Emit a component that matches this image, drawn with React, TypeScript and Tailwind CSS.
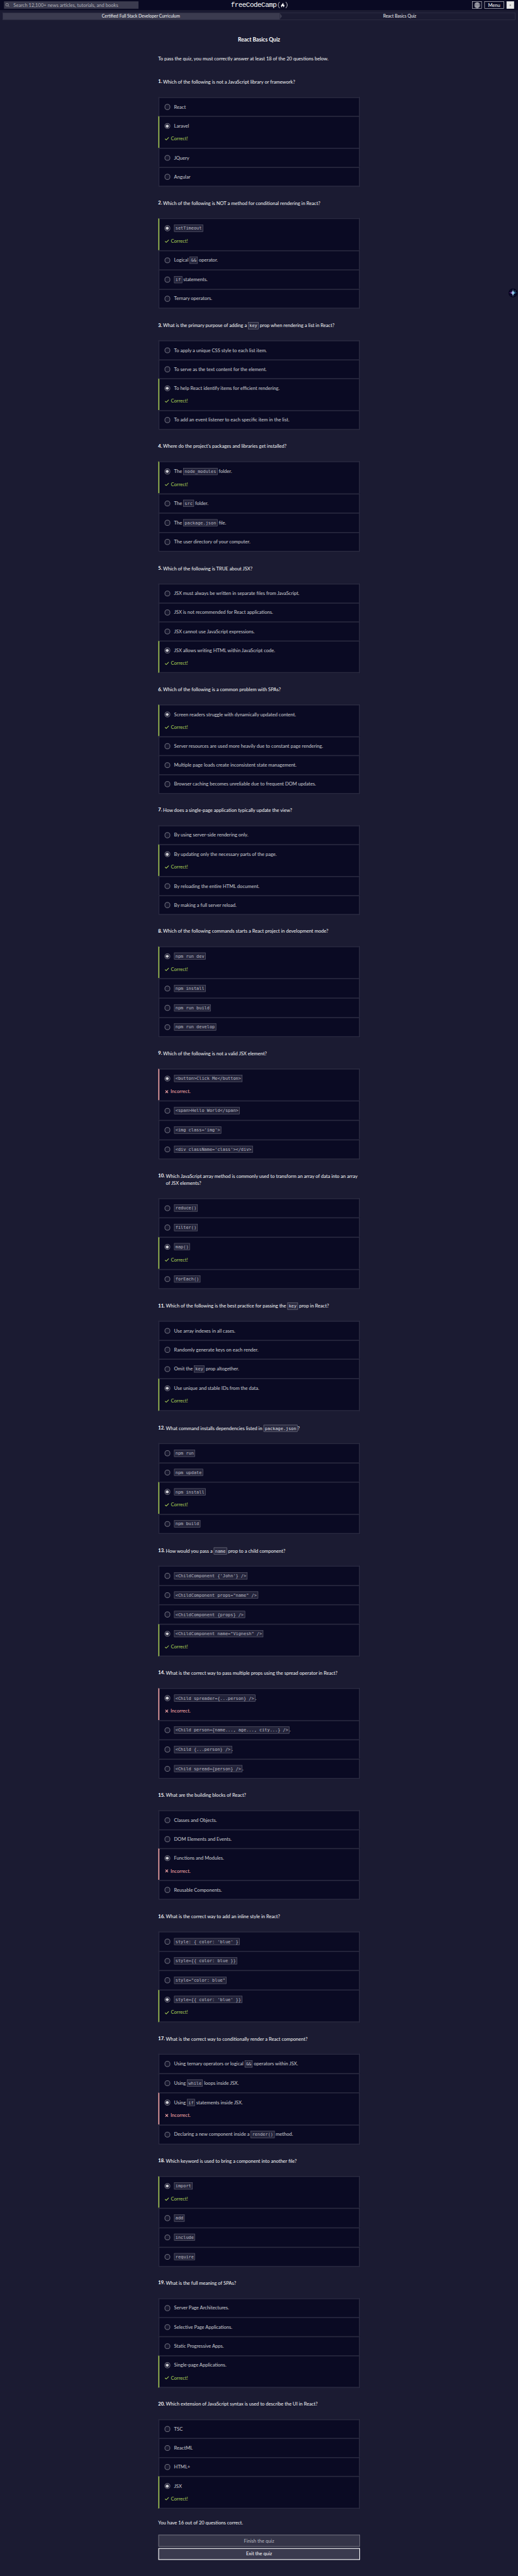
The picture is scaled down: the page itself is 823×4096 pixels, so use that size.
import { Fragment } from "react";

type Result = "correct" | "incorrect";

interface Question {
  text: string;
  options: string[];
  picked: number;
  result: Result;
  /** Height of the whole block, heading included. */
  block: string;
  tall?: boolean;
}

// Text between backticks is shown as inline code.
const questions: Question[] = [
  {
    text: "Which of the following is not a JavaScript library or framework?",
    options: ["React", "Laravel", "JQuery", "Angular"],
    picked: 1,
    result: "correct",
    block: "h-[360.2px]",
  },
  {
    text: "Which of the following is NOT a method for conditional rendering in React?",
    options: ["`setTimeout`", "Logical `&&` operator.", "`if` statements.", "Ternary operators."],
    picked: 0,
    result: "correct",
    block: "h-[364px]",
  },
  {
    text: "What is the primary purpose of adding a `key` prop when rendering a list in React?",
    options: [
      "To apply a unique CSS style to each list item.",
      "To serve as the text content for the element.",
      "To help React identify items for efficient rendering.",
      "To add an event listener to each specific item in the list.",
    ],
    picked: 2,
    result: "correct",
    block: "h-[360px]",
  },
  {
    text: "Where do the project's packages and libraries get installed?",
    options: [
      "The `node_modules` folder.",
      "The `src` folder.",
      "The `package.json` file.",
      "The user directory of your computer.",
    ],
    picked: 0,
    result: "correct",
    block: "h-[364px]",
  },
  {
    text: "Which of the following is TRUE about JSX?",
    options: [
      "JSX must always be written in separate files from JavaScript.",
      "JSX is not recommended for React applications.",
      "JSX cannot use JavaScript expressions.",
      "JSX allows writing HTML within JavaScript code.",
    ],
    picked: 3,
    result: "correct",
    block: "h-[360px]",
  },
  {
    text: "Which of the following is a common problem with SPAs?",
    options: [
      "Screen readers struggle with dynamically updated content.",
      "Server resources are used more heavily due to constant page rendering.",
      "Multiple page loads create inconsistent state management.",
      "Browser caching becomes unreliable due to frequent DOM updates.",
    ],
    picked: 0,
    result: "correct",
    block: "h-[359.8px]",
  },
  {
    text: "How does a single-page application typically update the view?",
    options: [
      "By using server-side rendering only.",
      "By updating only the necessary parts of the page.",
      "By reloading the entire HTML document.",
      "By making a full server reload.",
    ],
    picked: 1,
    result: "correct",
    block: "h-[360px]",
  },
  {
    text: "Which of the following commands starts a React project in development mode?",
    options: ["`npm run dev`", "`npm install`", "`npm run build`", "`npm run develop`"],
    picked: 0,
    result: "correct",
    block: "h-[364px]",
  },
  {
    text: "Which of the following is not a valid JSX element?",
    options: [
      "`<button>Click Me</button>`",
      "`<span>Hello World</span>`",
      "`<img class='img'>`",
      "`<div className='class'></div>`",
    ],
    picked: 0,
    result: "incorrect",
    block: "h-[365px]",
  },
  {
    text: "Which JavaScript array method is commonly used to transform an array of data into an array of JSX elements?",
    options: ["`reduce()`", "`filter()`", "`map()`", "`forEach()`"],
    picked: 2,
    result: "correct",
    block: "h-[386.4px]",
    tall: true,
  },
  {
    text: "Which of the following is the best practice for passing the `key` prop in React?",
    options: [
      "Use array indexes in all cases.",
      "Randomly generate keys on each render.",
      "Omit the `key` prop altogether.",
      "Use unique and stable IDs from the data.",
    ],
    picked: 3,
    result: "correct",
    block: "h-[363.8px]",
  },
  {
    text: "What command installs dependencies listed in `package.json`?",
    options: ["`npm run`", "`npm update`", "`npm install`", "`npm build`"],
    picked: 2,
    result: "correct",
    block: "h-[365px]",
  },
  {
    text: "How would you pass a `name` prop to a child component?",
    options: [
      "`<ChildComponent {'John'} />`",
      "`<ChildComponent props=\"name\" />`",
      "`<ChildComponent {props} />`",
      "`<ChildComponent name=\"Vignesh\" />`",
    ],
    picked: 3,
    result: "correct",
    block: "h-[364px]",
  },
  {
    text: "What is the correct way to pass multiple props using the spread operator in React?",
    options: [
      "`<Child spreader={...person} />`.",
      "`<Child person={name..., age..., city...} />`.",
      "`<Child {...person} />`.",
      "`<Child spread={person} />`.",
    ],
    picked: 0,
    result: "incorrect",
    block: "h-[364.1px]",
  },
  {
    text: "What are the building blocks of React?",
    options: [
      "Classes and Objects.",
      "DOM Elements and Events.",
      "Functions and Modules.",
      "Reusable Components.",
    ],
    picked: 2,
    result: "incorrect",
    block: "h-[360.9px]",
  },
  {
    text: "What is the correct way to add an inline style in React?",
    options: [
      "`style: { color: 'blue' }`",
      "`style={{ color: blue }}`",
      "`style=\"color: blue\"`",
      "`style={{ color: 'blue' }}`",
    ],
    picked: 3,
    result: "correct",
    block: "h-[364px]",
  },
  {
    text: "What is the correct way to conditionally render a React component?",
    options: [
      "Using ternary operators or logical `&&` operators within JSX.",
      "Using `while` loops inside JSX.",
      "Using `if` statements inside JSX.",
      "Declaring a new component inside a `render()` method.",
    ],
    picked: 2,
    result: "incorrect",
    block: "h-[363.8px]",
  },
  {
    text: "Which keyword is used to bring a component into another file?",
    options: ["`import`", "`add`", "`include`", "`require`"],
    picked: 0,
    result: "correct",
    block: "h-[364px]",
  },
  {
    text: "What is the full meaning of SPAs?",
    options: [
      "Server Page Architectures.",
      "Selective Page Applications.",
      "Static Progressive Apps.",
      "Single-page Applications.",
    ],
    picked: 3,
    result: "correct",
    block: "h-[359.9px]",
  },
  {
    text: "Which extension of JavaScript syntax is used to describe the UI in React?",
    options: ["TSC", "ReactML", "HTML+", "JSX"],
    picked: 3,
    result: "correct",
    block: "h-[339px]",
  },
];

function RichText({ value }: { value: string }) {
  return (
    <>
      {value.split("`").map((part, i) =>
        i % 2 === 1 ? (
          <code
            key={i}
            className="border border-[#858591] bg-[#2a2a40] px-[3px] py-[2px] font-['DejaVu_Sans_Mono',monospace] text-[12.96px] whitespace-pre text-[#dfdfe2]"
          >
            {part}
          </code>
        ) : (
          <Fragment key={i}>{part}</Fragment>
        ),
      )}
    </>
  );
}

function Radio({ checked }: { checked: boolean }) {
  return (
    <span className="flex size-[16.4px] shrink-0 items-center justify-center rounded-full border border-white bg-[#1b1b32]">
      {checked && <span className="size-[8.6px] rounded-full bg-white" />}
    </span>
  );
}

function Feedback({ result }: { result: Result }) {
  if (result === "correct") {
    return (
      <p className="mt-[17.4px] flex h-[20.6px] items-center gap-[6px] text-[#acd157]">
        <svg viewBox="0 0 13 10" className="h-[10px] w-[13px]" fill="none" stroke="currentColor" strokeWidth="1.9">
          <path d="M0.8 5.2 4.6 8.6 12.2 0.9" />
        </svg>
        Correct!
      </p>
    );
  }
  return (
    <p className="mt-[17.4px] flex h-[20.6px] items-center gap-[7px] pl-px text-[#ffadad]">
      <svg viewBox="0 0 10 10" className="size-[10px]" fill="none" stroke="currentColor" strokeWidth="2">
        <path d="M0.9 0.9 9.1 9.1M9.1 0.9 0.9 9.1" />
      </svg>
      Incorrect.
    </p>
  );
}

function Option({ value, result }: { value: string; result?: Result }) {
  const edge =
    result === "correct"
      ? "border-l-[#acd157]"
      : result === "incorrect"
        ? "border-l-[#ffadad]"
        : "border-l-[#2a2a40]";
  const line = value.includes("`") ? "h-[21.6px]" : "h-[20.6px]";
  return (
    <li
      className={`border-t-3 border-r-3 border-l-3 border-[#2a2a40] bg-[#0a0a23] py-[16.5px] pl-[16px] last:border-b-3 ${edge}`}
    >
      <div className={`flex items-center gap-[12px] opacity-80 ${line}`}>
        <Radio checked={result !== undefined} />
        <span>
          <RichText value={value} />
        </span>
      </div>
      {result && <Feedback result={result} />}
    </li>
  );
}

function QuestionBlock({ question, index }: { question: Question; index: number }) {
  return (
    <section className={question.block}>
      <div className={`flex pt-[17.5px] text-[#f5f6f7] ${question.tall ? "h-[92.9px]" : "h-[72px]"}`}>
        <b className={`-mt-px shrink-0 font-bold text-white ${index < 9 ? "w-[14.4px]" : "w-[22.8px]"}`}>
          {index + 1}.
        </b>
        <h2>
          <RichText value={question.text} />
        </h2>
      </div>
      <ul>
        {question.options.map((option, i) => (
          <Option key={option} value={option} result={i === question.picked ? question.result : undefined} />
        ))}
      </ul>
    </section>
  );
}

function Header() {
  return (
    <header className="grid h-[30px] grid-cols-[1fr_auto_1fr] items-center bg-[#0a0a23] px-[12px]">
      <div className="flex h-[22px] w-[400px] items-center gap-[12px] bg-[#3b3b4f] pl-[4px] text-[#b1b1bb]">
        <svg viewBox="0 0 12 12" className="size-[12px]" fill="none" stroke="#d0d0d5" strokeWidth="1.1">
          <circle cx="5" cy="5" r="4" />
          <path d="M8 8l3.4 3.4" />
        </svg>
        <span>Search 12,100+ news articles, tutorials, and books</span>
      </div>
      <div className="flex items-center pl-[2px] text-white">
        <span className="font-['Liberation_Mono',monospace] text-[20.5px] leading-[22px] tracking-[-0.97px]">
          freeCodeCamp
        </span>
        <svg viewBox="0 0 30 20" className="ml-[4px] h-[20px] w-[30px]" fill="none" stroke="white" strokeWidth="1.5">
          <path d="M6 0.8C0.2 6 0.2 14 6 19.2M24 0.8c5.8 5.2 5.8 13.2 0 18.4" />
          <path
            d="M14.3 3c3 3-4.5 6-4.2 9.800.2 2.500 1.600 3.800 3.200 4.500-1.600-2.200.2-3.500 1.200-5.300.4 1.200 1.200 1.200 1.500.8 1.500 1.600 1.300 3.200.2 4.500 4.500-2 4.500-6 2.500-8.500-.2.900-.7 1.300-1.200 1.200C18.200 7 16.500 4 14.300 3z"
            fill="white"
            stroke="none"
          />
        </svg>
      </div>
      <div className="flex items-center justify-end gap-[8px] text-white">
        <span className="flex h-[22px] w-[28px] items-center justify-center border border-white">
          <svg viewBox="0 0 17 17" className="size-[17px]" fill="none" stroke="white" strokeWidth="1.2">
            <circle cx="8.5" cy="8.5" r="7.7" />
            <ellipse cx="8.5" cy="8.5" rx="3.8" ry="7.7" />
            <path d="M8.5 0.8v15.4M0.8 8.5h15.4M2 4.7h13M2 12.3h13" />
          </svg>
        </span>
        <span className="flex h-[22px] w-[58px] items-center justify-center border border-white">Menu</span>
        <span className="flex size-[22px] items-center justify-center border border-[#d0d0d5] bg-[#e6e6e6]">
          <span className="h-[5px] w-[4px] rounded-full bg-[#8f8f8f]" />
        </span>
      </div>
    </header>
  );
}

function Breadcrumb() {
  return (
    <nav className="mx-[8px] mt-[8px] flex h-[20.7px] border border-[#3b3b4f] text-[12.8px] text-[#f5f6f7]">
      <div className="flex w-[823px] items-center justify-center bg-[#3b3b4f] pr-[3px]">
        Certified Full Stack Developer Curriculum
      </div>
      <svg viewBox="0 0 7 19" preserveAspectRatio="none" className="h-full w-[7px]">
        <path d="M0 0 7 9.5 0 19z" fill="#3b3b4f" />
      </svg>
      <div className="flex flex-1 items-center justify-center pl-[7px]">React Basics Quiz</div>
    </nav>
  );
}

function AssistantButton() {
  return (
    <svg viewBox="0 0 28 28" className="absolute top-[858px] left-[1511.5px] size-[28px]">
      <defs>
        <linearGradient id="spark" x1="0" x2="1">
          <stop offset="0.15" stopColor="#a02bc4" />
          <stop offset="0.5" stopColor="#9fd8ef" />
          <stop offset="0.85" stopColor="#1c7fc4" />
        </linearGradient>
      </defs>
      <circle cx="14" cy="14" r="13.5" fill="#070720" />
      <path
        d="M14 1.5c.6 9.500 3 11.900 12.500 12.500-9.500.6-11.900 3-12.500 12.500C13.400 17 11 14.600 1.500 14 11 13.400 13.400 11 14 1.500z"
        fill="url(#spark)"
      />
      <circle cx="8.5" cy="9" r="1.2" fill="#8a2fb8" />
      <circle cx="19.8" cy="9" r="1.4" fill="#5fb4d8" />
      <circle cx="8.5" cy="20.5" r="1.1" fill="#3f2c8c" />
      <circle cx="19.5" cy="20.5" r="1.1" fill="#1f2f78" />
    </svg>
  );
}

export default function App() {
  return (
    <div className="h-[4096px] w-[823px] overflow-hidden bg-[#1b1b32]">
      <div className="relative h-[7669px] w-[1541px] origin-top-left scale-[0.5341] bg-[#1b1b32] font-['Lato',sans-serif] text-[14.2px] leading-[20.6px]">
        <Header />
        <Breadcrumb />
        <main className="mx-auto w-[600px] text-[#f5f6f7]">
          <h1 className="mt-[49px] text-center text-[16px] leading-[20.6px] font-bold text-white">React Basics Quiz</h1>
          <p className="mt-[36.7px] mb-[31.3px]">
            To pass the quiz, you must correctly answer at least 18 of the 20 questions below.
          </p>
          {questions.map((question, i) => (
            <QuestionBlock key={question.text} question={question} index={i} />
          ))}
          <p className="mt-[32px]">You have 16 out of 20 questions correct.</p>
          <button className="mt-[24.5px] flex h-[36px] w-full items-center justify-center border-2 border-[#6f6f7c] bg-[#343448] text-[#b9b9c1]">
            Finish the quiz
          </button>
          <button className="mt-[4px] flex h-[35px] w-full items-center justify-center border-2 border-white bg-[#3b3b4f] text-white">
            Exit the quiz
          </button>
        </main>
        <AssistantButton />
      </div>
    </div>
  );
}
